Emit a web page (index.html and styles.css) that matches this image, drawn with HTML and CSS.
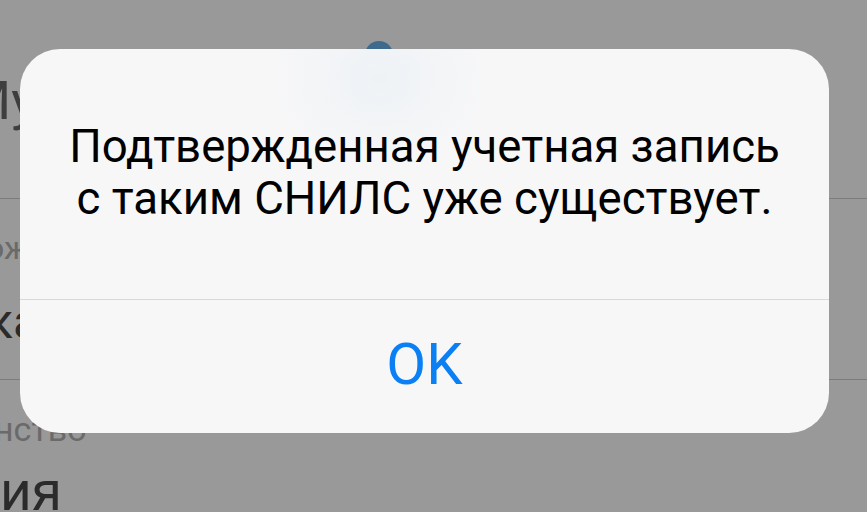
FILE: index.html
```html
<!DOCTYPE html>
<html lang="ru">
<head>
    <meta charset="UTF-8">
    <meta name="viewport" content="width=device-width, initial-scale=1.0">
    <title>Профиль</title>
    <link rel="stylesheet" href="styles.css">
</head>
<body>
    <!-- Страница под затемнением -->
    <div class="page">
        <div class="page-header">
            <span class="avatar"></span>
        </div>
        <div class="row row-name">
            <span class="value value-big">Му</span>
        </div>
        <div class="row row-field">
            <span class="label">ож</span>
            <span class="value">ка</span>
        </div>
        <div class="row row-last">
            <span class="label label-wide">нство</span>
            <span class="value value-last">ия</span>
        </div>
    </div>

    <!-- Окно предупреждения -->
    <div class="alert">
        <div class="alert-message">
            Подтвержденная учетная запись<br>
            с таким СНИЛС уже существует.
        </div>
        <button class="alert-button">OK</button>
    </div>
</body>
</html>
```

FILE: styles.css
```css
body {
    margin: 0;
    width: 867px;
    height: 512px;
    overflow: hidden;
    background-color: #999999;
    font-family: Roboto, "Liberation Sans", Arial, sans-serif;
}
.page {
    display: flex;
    flex-direction: column;
}
.page-header {
    height: 72px;
    padding-left: 365px;
    box-sizing: border-box;
    padding-top: 41px;
}
.avatar {
    display: block;
    width: 28px;
    height: 28px;
    border-radius: 50%;
    background-color: #3f6a8e;
}
.row {
    display: flex;
    flex-direction: column;
    border-bottom: 1px solid #7c7c7c;
}
.row-name {
    height: 126px;
}
.row-field {
    height: 180px;
}
.row-last {
    border-bottom: none;
}
.label {
    font-size: 32px;
    color: #6a6a6a;
    margin-left: -14px;
    margin-top: 30px;
}
.label-wide {
    font-size: 34px;
    margin-left: -6px;
    margin-top: 29px;
}
.value {
    font-size: 48px;
    color: #2b2b2b;
    margin-left: -13px;
    margin-top: 26px;
}
.value-big {
    font-size: 54px;
    color: #3e3e3e;
    margin-left: -36px;
    margin-top: -3px;
}
.value-last {
    font-size: 55px;
    margin-left: 0;
    margin-top: 10px;
}

.alert {
    position: absolute;
    left: 20px;
    top: 49px;
    width: 809px;
    height: 384px;
    border-radius: 40px;
    overflow: hidden;
    display: flex;
    flex-direction: column;
    background-color: #f7f7f8;
    background-image: radial-gradient(ellipse 110px 90px at 360px 30px, #eef2f6, rgba(247, 247, 248, 0));
}
.alert-message {
    height: 251px;
    box-sizing: border-box;
    padding-top: 72px;
    text-align: center;
    font-size: 45.6px;
    line-height: 52px;
    color: #000;
    border-bottom: 1px solid #d9d9dd;
}
.alert-button {
    flex: 1;
    border: none;
    background: transparent;
    font-family: inherit;
    font-size: 58px;
    color: #0b7ff4;
    padding: 0;
    padding-bottom: 6px;
}
```
